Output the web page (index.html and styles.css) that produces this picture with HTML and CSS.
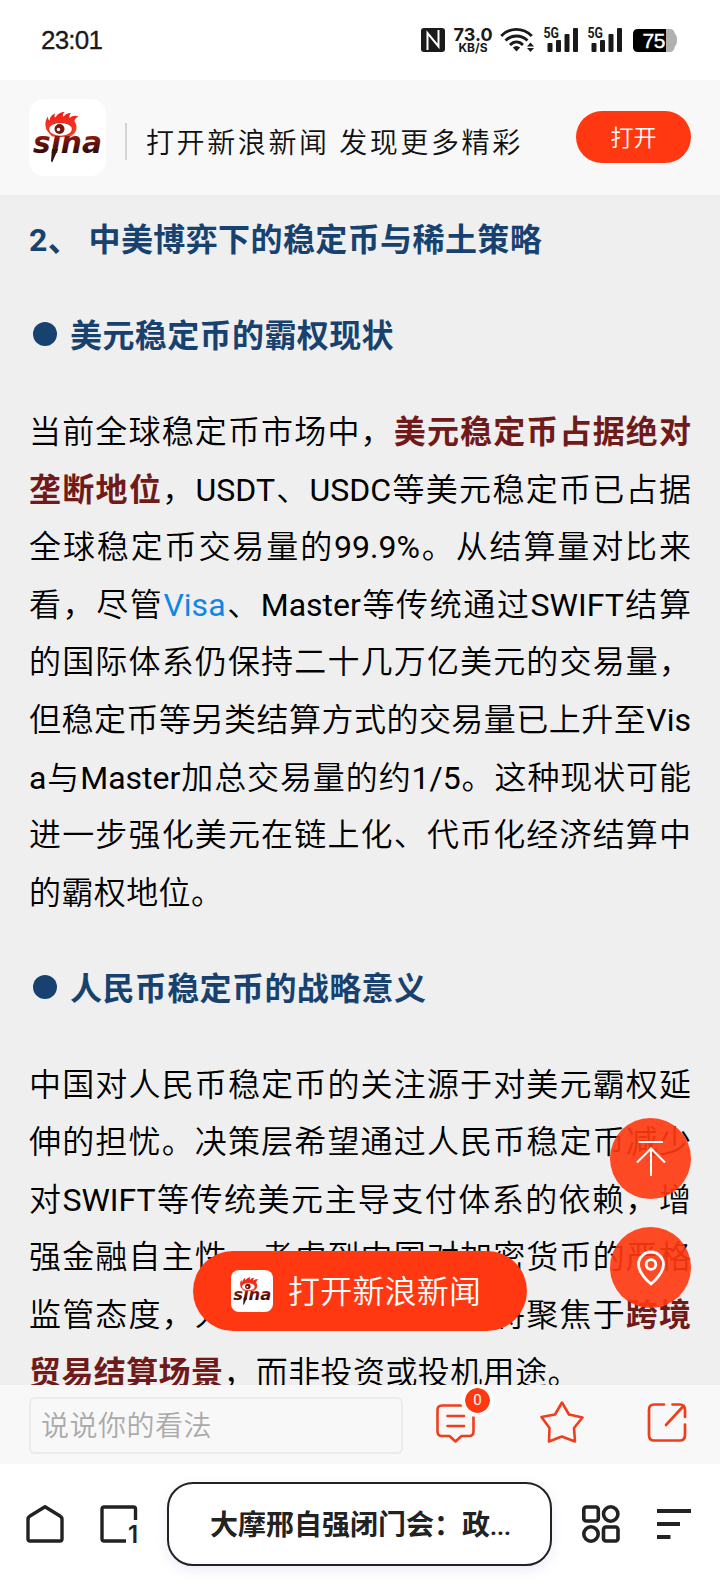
FILE: index.html
```html
<!DOCTYPE html>
<html lang="zh-CN">
<head>
    <meta charset="UTF-8">
    <meta name="viewport" content="width=device-width, initial-scale=1.0">
    <title>新浪新闻</title>
    <link rel="stylesheet" href="styles.css">
</head>
<body>
    <!-- Shared logo -->
    <svg class="defs" width="0" height="0">
        <defs>
            <linearGradient id="wordFill" x1="0" y1="0" x2="0" y2="1">
                <stop offset="0.35" stop-color="#8a1710"/>
                <stop offset="0.8" stop-color="#2c0c0a"/>
            </linearGradient>
            <linearGradient id="flameFill" x1="0" y1="0" x2="0" y2="1">
                <stop offset="0" stop-color="#f01d16"/>
                <stop offset="1" stop-color="#f4462c"/>
            </linearGradient>
        </defs>
        <symbol id="logo" viewBox="0 0 76 76">
            <path d="M17.5 31 C15.5 25 16.500 21 19 17.500 C19 20 19.500 21 20.500 21.500 C21 18 23 15.500 26 14.500 C25 17 25.500 18 26.500 18.500 C28 15.500 31 13 35.500 13 C33.500 15 33.500 17 34.500 17.800 C36 15.500 38.500 14 42 14 C40 16 40 18 40.800 19 C43 17 46 16 49.500 17.500 C46.500 18.500 45.500 20.500 45.500 22.500 C49.500 28 47.500 34 41.500 37.500 L23 37.500 Z" fill="url(#flameFill)"/>
            <ellipse cx="31.500" cy="30.300" rx="12" ry="7" fill="#fff" stroke="#e32a1c" stroke-width="1.200"/>
            <circle cx="30.500" cy="30" r="5" fill="#7b1710"/>
            <circle cx="29.500" cy="30.500" r="1.700" fill="#fff"/>
            <text class="logo-word" x="4" y="54" textLength="69" lengthAdjust="spacingAndGlyphs" fill="url(#wordFill)">sına</text>
            <path d="M23 50 L29 50 L23.200 63.500 L22 62 Z" fill="#35100c"/>
        </symbol>
    </svg>

    <div class="page">
        <div class="status-bar">
            <span class="clock">23:01</span>
            <div class="status-icons">
                <svg class="nfc" width="24" height="24" viewBox="0 0 24 24">
                    <rect width="24" height="24" rx="3" fill="#1a1a1a"/>
                    <path d="M6.500 22 V5 L17.500 18.500 V2" fill="none" stroke="#fff" stroke-width="2"/>
                </svg>
                <div class="speed"><b>73.0</b><i>KB/S</i></div>
                <svg class="wifi" width="34" height="24" viewBox="0 0 34 24" fill="none" stroke="#1a1a1a" stroke-width="2.800">
                    <path d="M1.200 8 C9.500 -0.800 23 -0.800 31.800 8"/>
                    <path d="M5.500 12.500 C11.500 6.500 21 6.500 27.500 12.500"/>
                    <path d="M10 17 C14 13 19 13 23 17"/>
                    <path d="M12.800 19.500 Q16.500 16.500 20.200 19.500 L16.500 23.500 Z M27 18.500 L30.500 14.500 L34 18.500 Z M27 20 L30.500 24 L34 20 Z" fill="#1a1a1a" stroke="none"/>
                </svg>
                <svg class="signal" width="36" height="25" viewBox="0 0 36 25" fill="#1a1a1a">
                    <text class="net" x="0.500" y="11" textLength="15.500" lengthAdjust="spacingAndGlyphs">5G</text>
                    <rect x="4.500" y="16" width="5" height="9" rx="1"/><rect x="13" y="13" width="5" height="12" rx="1"/>
                    <rect x="21.500" y="7" width="5" height="18" rx="1"/><rect x="30" y="1" width="5" height="24" rx="1"/>
                </svg>
                <svg class="signal second" width="36" height="25" viewBox="0 0 36 25" fill="#1a1a1a">
                    <text class="net" x="0.500" y="11" textLength="15.500" lengthAdjust="spacingAndGlyphs">5G</text>
                    <rect x="4.500" y="16" width="5" height="9" rx="1"/><rect x="13" y="13" width="5" height="12" rx="1"/>
                    <rect x="21.500" y="7" width="5" height="18" rx="1"/><rect x="30" y="1" width="5" height="24" rx="1"/>
                </svg>
                <svg class="battery" width="44" height="24" viewBox="0 0 44 24">
                    <path d="M33 1 H37 Q41 1 42 6 Q44 7 44 12 Q44 17 42 18 Q41 24 37 24 H33 Z" fill="#b0b0b0"/>
                    <path d="M5 1 H33 V24 H5 Q0 24 0 19 V6 Q0 1 5 1 Z" fill="#000"/>
                    <text class="level" x="9.500" y="20" textLength="23" fill="#fff">75</text>
                </svg>
            </div>
        </div>

        <header class="app-header">
            <div class="logo-box"><svg width="76" height="76"><use href="#logo"/></svg></div>
            <span class="divider"></span>
            <span class="slogan">打开新浪新闻 发现更多精彩</span>
            <button class="open-btn">打开</button>
        </header>

        <main class="article">
            <h3>2、 中美博弈下的稳定币与稀土策略</h3>
            <h3 class="dot-title"><span class="dot"></span>美元稳定币的霸权现状</h3>
            <p>
                <span class="line">当前全球稳定币市场中，<b>美元稳定币占据绝对</b></span>
                <span class="line"><b>垄断地位</b>，USDT、USDC等美元稳定币已占据</span>
                <span class="line">全球稳定币交易量的99.9%。从结算量对比来</span>
                <span class="line">看，尽管<a>Visa</a>、Master等传统通过SWIFT结算</span>
                <span class="line">的国际体系仍保持二十几万亿美元的交易量，</span>
                <span class="line">但稳定币等另类结算方式的交易量已上升至Vis</span>
                <span class="line">a与Master加总交易量的约1/5。这种现状可能</span>
                <span class="line">进一步强化美元在链上化、代币化经济结算中</span>
                <span class="line last">的霸权地位。</span>
            </p>
            <h3 class="dot-title"><span class="dot"></span>人民币稳定币的战略意义</h3>
            <p>
                <span class="line">中国对人民币稳定币的关注源于对美元霸权延</span>
                <span class="line">伸的担忧。决策层希望通过人民币稳定币减少</span>
                <span class="line">对SWIFT等传统美元主导支付体系的依赖，增</span>
                <span class="line">强金融自主性。考虑到中国对加密货币的严格</span>
                <span class="line">监管态度，人民币稳定币的应用将聚焦于<b>跨境</b></span>
                <span class="line last"><b>贸易结算场景</b>，而非投资或投机用途。</span>
            </p>
        </main>

        <div class="comment-bar">
            <div class="comment-input">说说你的看法</div>
            <div class="actions">
                <div class="comment-icon">
                    <svg width="40" height="40" viewBox="0 0 40 40" fill="none" stroke="#f03e1d" stroke-width="2.600" stroke-linecap="round" stroke-linejoin="round">
                        <path d="M26 1.500 H6 Q1.500 1.500 1.500 6 V27.500 Q1.500 32 6 32 H13.500 L19.500 37.500 L25.500 32 H33 Q37.500 32 37.500 27.500 V12"/>
                        <path d="M11.500 12 H28 M11.500 22 H28"/>
                    </svg>
                    <span class="badge">0</span>
                </div>
                <svg class="star" width="44" height="44" viewBox="0 0 44 44" fill="none" stroke="#f03e1d" stroke-width="2.600" stroke-linejoin="round">
                    <path d="M22 2.500 L29 14.500 L42.500 17.500 L34 28 L35 41.500 L21.800 36.500 L9 41.500 L9.500 28 L1.500 17 L15 14.500 Z"/>
                </svg>
                <svg class="share" width="40" height="40" viewBox="0 0 40 40" fill="none" stroke="#f03e1d" stroke-width="2.700" stroke-linecap="round" stroke-linejoin="round">
                    <path d="M17 1.500 H7 Q2 1.500 2 7 V32 Q2 37.500 7 37.500 H33 Q38 37.500 38 32 V21.500"/>
                    <path d="M25.500 1.500 H33 Q38 1.500 38 7 V14 M36 3.500 L19 22"/>
                </svg>
            </div>
        </div>

        <nav class="browser-bar">
            <svg class="home" width="38" height="38" viewBox="0 0 38 38" fill="none" stroke="#222" stroke-width="3.400" stroke-linejoin="round">
                <path d="M19 1.700 L34 11 Q36 12.200 36 14.500 V34 Q36 36 34 36 H4 Q2 36 2 34 V14.500 Q2 12.200 4 11 Z"/>
            </svg>
            <svg class="tabs" width="38" height="38" viewBox="0 0 38 38" fill="none" stroke="#222" stroke-width="3.400">
                <path d="M26 36 H4 Q2 36 2 34 V4 Q2 2 4 2 H33.500 Q35.500 2 35.500 4 V15"/>
                <text class="tab-count" x="28" y="37.500" fill="#222" stroke="none">1</text>
            </svg>
            <div class="address">大摩邢自强闭门会：政<span class="dots">...</span></div>
            <svg class="apps" width="38" height="38" viewBox="0 0 38 38" fill="none" stroke="#222" stroke-width="3.600">
                <rect x="1.800" y="2" width="14.500" height="14" rx="2.500"/><circle cx="28.700" cy="9" r="7.200"/>
                <circle cx="9" cy="29" r="7.200"/><rect x="21.500" y="22" width="14.500" height="14" rx="2.500"/>
            </svg>
            <svg class="menu" width="34" height="30" viewBox="0 0 34 30" stroke="#222" stroke-width="3.800">
                <path d="M0 2 H34 M0 15 H23 M0 28 H13.500"/>
            </svg>
        </nav>

        <!-- Floating buttons over the article -->
        <div class="open-app">
            <div class="mini-logo"><svg width="42" height="42"><use href="#logo"/></svg></div>
            <span>打开新浪新闻</span>
        </div>
        <div class="float-tools">
            <div class="round-btn">
                <svg width="30" height="36" viewBox="0 0 30 36" fill="none" stroke="#fff" stroke-width="2">
                    <path d="M2.500 1 H27 M15 35 V8 M1 21.500 L15 7.500 L29 21.500"/>
                </svg>
            </div>
            <div class="round-btn">
                <svg width="28" height="36" viewBox="0 0 28 36" fill="none" stroke="#fff" stroke-width="2.800">
                    <path d="M14 34 C10 31 1.500 22 1.500 14.500 A12.500 12.500 0 0 1 26.500 14.500 C26.500 22 18 31 14 34 Z"/>
                    <circle cx="14" cy="14.500" r="4.800"/>
                </svg>
            </div>
        </div>
    </div>
</body>
</html>
```

FILE: styles.css
```css
* {
    box-sizing: border-box;
}
body {
    margin: 0;
    font-family: Roboto, "Noto Sans CJK SC DemiLight", "Noto Sans CJK SC", sans-serif;
    background: #fff;
    color: #111;
}
svg {
    display: block;
    flex-shrink: 0;
}
.defs {
    position: absolute;
}
.logo-word {
    font-family: "DejaVu Sans", sans-serif;
    font-size: 30px;
    font-weight: 700;
    font-style: italic;
}
.page {
    position: relative;
    display: flex;
    flex-direction: column;
    width: 720px;
    height: 1584px;
    overflow: hidden;
}

/* Status bar */
.status-bar {
    display: flex;
    justify-content: space-between;
    height: 80px;
    flex-shrink: 0;
    padding: 0 43px 0 41px;
    color: #1a1a1a;
}
.clock {
    font-family: "Liberation Sans", sans-serif;
    font-size: 26px;
    line-height: 80px;
    letter-spacing: -0.8px;
    -webkit-text-stroke: 0.3px #1a1a1a;
}
.status-icons {
    display: flex;
    align-items: flex-start;
    padding-top: 28px;
}
.speed {
    display: flex;
    flex-direction: column;
    align-items: center;
    width: 38px;
    margin: -1px 8px 0 9px;
    font-family: Inter, sans-serif;
}
.speed b {
    font-size: 18px;
    line-height: 15px;
    font-weight: 700;
}
.speed i {
    font-size: 12px;
    line-height: 10px;
    font-style: normal;
    font-weight: 700;
    margin-top: 1px;
}
.signal {
    margin: -1px 0 0 9px;
}
.signal.second {
    margin-left: 8px;
}
.net {
    font-family: Roboto, sans-serif;
    font-size: 14px;
    font-weight: 700;
}
.battery {
    margin-left: 10px;
}
.level {
    font-family: "Liberation Sans", sans-serif;
    font-size: 21px;
    stroke: #fff;
    stroke-width: 0.4px;
}

/* App header */
.app-header {
    display: flex;
    align-items: center;
    height: 115px;
    flex-shrink: 0;
    padding: 0 29px;
    background: #f8f8f8;
}
.logo-box {
    width: 77px;
    height: 77px;
    margin-top: -1px;
    border-radius: 15px;
    background: #fff;
}
.divider {
    width: 2px;
    height: 37px;
    margin: 8px 19px 0 19px;
    background: #d4d4d4;
}
.slogan {
    font-size: 28px;
    letter-spacing: 2.6px;
    padding-top: 7px;
    white-space: nowrap;
}
.open-btn {
    width: 115px;
    height: 52px;
    margin: -1px 0 0 auto;
    padding: 0 0 3px;
    border: none;
    border-radius: 26px;
    background: #ff3811;
    color: #fff;
    font-family: inherit;
    font-size: 23px;
}

/* Article */
.article {
    flex: 1;
    min-height: 0;
    overflow: hidden;
    padding: 17px 29px 0;
    background: #efefef;
    color: #000;
    font-size: 32px;
    line-height: 57.6px;
}
h3, .line b, .address {
    font-family: Roboto, "Noto Sans CJK SC", sans-serif;
    font-weight: 700;
}
h3 {
    margin: 0 0 38.4px;
    font-size: 32px;
    letter-spacing: 0.4px;
    color: #17426f;
}
.dot-title {
    display: flex;
    align-items: center;
}
.dot {
    width: 24px;
    height: 24px;
    margin: 0 13px 5px 4px;
    border-radius: 50%;
    background: #17426f;
}
p {
    margin: 0 0 38.4px;
}
.line {
    display: block;
    height: 57.6px;
    white-space: nowrap;
    text-align: justify;
    text-align-last: justify;
    text-justify: inter-character;
}
.line.last {
    text-align-last: left;
    letter-spacing: 0.4px;
}
.line b {
    color: #701a1a;
}
.line a {
    color: #0f87e6;
}

/* Comment bar */
.comment-bar {
    display: flex;
    align-items: center;
    height: 79px;
    flex-shrink: 0;
    padding: 0 33px 0 29px;
    background: #f8f8f8;
}
.comment-input {
    width: 374px;
    height: 57px;
    margin-top: 2px;
    padding-left: 10px;
    border: 2px solid #ebebeb;
    border-radius: 6px;
    color: #aaa;
    font-size: 28px;
    letter-spacing: 0.5px;
    line-height: 56px;
}
.actions {
    display: flex;
    flex: 1;
    align-items: center;
    justify-content: space-between;
    margin-left: 33px;
}
.comment-icon {
    position: relative;
    margin-top: -2px;
}
.star {
    margin-top: -5px;
}
.share {
    margin-top: -4px;
}
.badge {
    position: absolute;
    top: -20px;
    left: 25px;
    width: 33px;
    height: 33px;
    border: 4px solid #fff;
    border-radius: 50%;
    background: #ff3811;
    background-clip: padding-box;
    color: #fff;
    font-size: 15px;
    line-height: 25px;
    text-align: center;
}

/* Browser bar */
.browser-bar {
    display: flex;
    align-items: center;
    height: 120px;
    flex-shrink: 0;
    padding: 0 29px 0 26px;
    background: #fff;
}
.tabs {
    margin-left: 36px;
}
.tab-count {
    font-family: Inter, sans-serif;
    font-size: 24px;
    font-weight: 600;
}
.address {
    width: 385px;
    height: 84px;
    margin-left: 29px;
    padding-left: 41px;
    border: 2px solid #222;
    border-radius: 26px;
    box-shadow: 0 4px 12px rgba(90, 90, 200, 0.12);
    color: #222;
    font-size: 28px;
    line-height: 83px;
    white-space: nowrap;
}
.dots {
    font-size: 24px;
}
.apps {
    margin-left: 30px;
}
.menu {
    margin-left: 37px;
}

/* Floating buttons */
.open-app {
    position: absolute;
    left: 193px;
    top: 1251px;
    display: flex;
    align-items: center;
    gap: 15px;
    width: 334px;
    height: 80px;
    padding-left: 38px;
    border-radius: 40px;
    background: #ff3811;
    color: #fff;
    font-size: 32px;
    white-space: nowrap;
}
.open-app span {
    margin-top: -5px;
    letter-spacing: 0.2px;
}
.mini-logo {
    border-radius: 8px;
    background: #fff;
}
.float-tools {
    position: absolute;
    right: 29px;
    top: 1118px;
    display: flex;
    flex-direction: column;
    gap: 28px;
}
.round-btn {
    display: flex;
    align-items: center;
    justify-content: center;
    width: 81px;
    height: 81px;
    border-radius: 50%;
    background: rgba(255, 56, 17, 0.91);
}
```
